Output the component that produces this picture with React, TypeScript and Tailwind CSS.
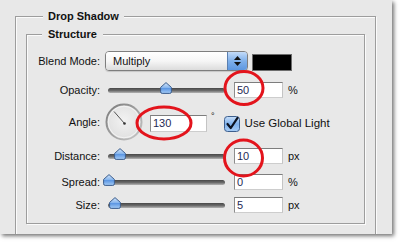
const labelCls = "w-[74px] shrink-0 text-right pr-[1px]";

function Slider({ thumb }: { thumb: number }) {
  return (
    <div className="relative ml-0 h-[16px] w-[123px] shrink-0">
      <div className="absolute left-[3px] top-[6px] h-[5px] w-[117px] rounded-full bg-gradient-to-b from-[#474747] via-[#6a6a6a] to-[#b5b5b5]" />
      <svg
        className="absolute top-0"
        style={{ left: thumb }}
        width="12"
        height="12"
        viewBox="0 0 12 12"
      >
        <defs>
          <linearGradient id="thumbFill" x1="0" y1="0" x2="0" y2="1">
            <stop offset="0" stopColor="#d4e6fb" />
            <stop offset="0.45" stopColor="#8bb8ee" />
            <stop offset="0.55" stopColor="#5d97e3" />
            <stop offset="1" stopColor="#a7cdf6" />
          </linearGradient>
        </defs>
        <path
          d="M6 0.6 L11.4 5.4 V9.8 Q11.4 11.4 9.8 11.4 H2.2 Q0.6 11.4 0.6 9.8 V5.4 Z"
          fill="url(#thumbFill)"
          stroke="#3c5d8c"
          strokeWidth="1"
        />
      </svg>
    </div>
  );
}

function NumField({ value, w = 49 }: { value: string; w?: number }) {
  return (
    <div
      className="h-[16px] shrink-0 border border-t-[#7d7d7d] border-l-[#8d8d8d] border-r-[#c4c4c4] border-b-[#cdcdcd] bg-white pl-[2px] text-[11px] leading-[14px] text-[#1f2a55]"
      style={{ width: w }}
    >
      {value}
    </div>
  );
}

function Row({ label, top, children }: { label: string; top: string; children: React.ReactNode }) {
  return (
    <div className={`flex items-center ${top}`}>
      <div className={labelCls}>{label}</div>
      <div className="ml-[4px] flex items-center">{children}</div>
    </div>
  );
}

export default function App() {
  return (
    <div className="relative h-[243px] w-[400px] overflow-hidden bg-white font-['Liberation_Sans',Arial,sans-serif] text-[11px] text-[#111]">
      <div className="h-[234px] w-[392px] overflow-hidden bg-[#e8e8e8] pl-[15px] pr-[16px] pt-[9px] shadow-[2px_2px_4px_rgba(0,0,0,0.55)]">
        <fieldset className="min-h-[240px] border border-[#9d9d9d] px-[10px] pt-[4px] shadow-[inset_1px_1px_0_#fbfbfb,1px_1px_0_#fbfbfb]">
          <legend className="ml-[17px] bg-[#e8e8e8] px-[5px] text-[11px] font-bold leading-[14px] text-[#111]">
            Drop Shadow
          </legend>
          <fieldset className="border border-[#9d9d9d] pb-[10px] pt-[10px] shadow-[inset_1px_1px_0_#fbfbfb,1px_1px_0_#fbfbfb]">
            <legend className="ml-[15px] bg-[#e8e8e8] px-[6px] text-[11px] font-bold leading-[14px] text-[#111]">
              Structure
            </legend>

            {/* blend mode */}
            <div className="flex h-[20px] items-center">
              <div className={labelCls}>Blend Mode:</div>
              <div className="ml-[4px] flex h-[20px] w-[143px] shrink-0 overflow-hidden rounded-[4px] border border-[#7e7e7e] shadow-[0_1px_1px_rgba(0,0,0,0.15)]">
                <div className="flex flex-1 items-center bg-gradient-to-b from-white via-[#f6f6f6] to-[#dcdcdc] pl-[7px] text-[11px] text-[#111]">
                  Multiply
                </div>
                <div className="flex w-[20px] flex-col items-center justify-center gap-[2px] border-l border-[#5a7fb0] bg-gradient-to-b from-[#c3dbf8] via-[#7fb0ea] to-[#5d97e0]">
                  <svg width="7" height="4" viewBox="0 0 7 4">
                    <path d="M3.5 0 L7 4 H0 Z" fill="#111" />
                  </svg>
                  <svg width="7" height="4" viewBox="0 0 7 4">
                    <path d="M0 0 H7 L3.5 4 Z" fill="#111" />
                  </svg>
                </div>
              </div>
              <div className="ml-[4px] mt-[3px] h-[17px] w-[40px] shrink-0 border border-[#6d6d6d] bg-black" />
            </div>

            <Row label="Opacity:" top="mt-[11px] h-[16px]">
              <Slider thumb={55} />
              <div className="ml-[6px]">
                <NumField value="50" />
              </div>
              <span className="ml-[5px]">%</span>
            </Row>

            {/* angle */}
            <div className="mt-[5px] flex h-[38px] items-center">
              <div className={labelCls}>Angle:</div>
              <svg className="ml-[3px] shrink-0" width="40" height="38" viewBox="0 0 40 38">
                <defs>
                  <linearGradient id="ring" x1="0" y1="0" x2="1" y2="1">
                    <stop offset="0" stopColor="#7a7a7a" />
                    <stop offset="1" stopColor="#c8c8c8" />
                  </linearGradient>
                  <radialGradient id="face" cx="0.5" cy="0.45" r="0.6">
                    <stop offset="0" stopColor="#f2f2f2" />
                    <stop offset="1" stopColor="#dedede" />
                  </radialGradient>
                </defs>
                <circle cx="20" cy="19" r="17.5" fill="url(#face)" stroke="url(#ring)" strokeWidth="2" />
                <circle cx="20" cy="19" r="15.8" fill="none" stroke="#f8f8f8" strokeWidth="0.8" />
                <line x1="20.5" y1="20.5" x2="10" y2="8.5" stroke="#555" strokeWidth="1" />
                <circle cx="20.5" cy="20.5" r="1.3" fill="#333" />
              </svg>
              <div className="ml-[6px] mt-[3px]">
                <div className="h-[17px] w-[57px] border border-t-[#7d7d7d] border-l-[#8d8d8d] border-r-[#c4c4c4] border-b-[#cdcdcd] bg-white pl-[2px] text-[11px] leading-[15px] text-[#1f2a55]">
                  130
                </div>
              </div>
              <span className="ml-[4px] self-start mt-[9px] text-[9px] leading-[9px]">°</span>
              <svg className="ml-[9px] mt-[3px] shrink-0" width="16" height="16" viewBox="0 0 16 16">
                <defs>
                  <linearGradient id="cb" x1="0" y1="0" x2="0" y2="1">
                    <stop offset="0" stopColor="#c9e0fa" />
                    <stop offset="0.5" stopColor="#7fb1ec" />
                    <stop offset="1" stopColor="#a8cdf6" />
                  </linearGradient>
                </defs>
                <rect x="0.5" y="0.5" width="15" height="15" rx="3" fill="url(#cb)" stroke="#3d5f8e" />
                <path d="M3.5 8 L6.8 12 L13.5 1.8" fill="none" stroke="#0c1220" strokeWidth="2.2" strokeLinecap="round" strokeLinejoin="round" />
              </svg>
              <span className="ml-[5px] mt-[3px] text-[11.5px]">Use Global Light</span>
            </div>

            <Row label="Distance:" top="mt-[7px] h-[16px]">
              <Slider thumb={9} />
              <div className="ml-[6px]">
                <NumField value="10" />
              </div>
              <span className="ml-[5px]">px</span>
            </Row>

            <Row label="Spread:" top="mt-[10px] h-[16px]">
              <Slider thumb={-2} />
              <div className="ml-[6px]">
                <NumField value="0" />
              </div>
              <span className="ml-[5px]">%</span>
            </Row>

            <Row label="Size:" top="mt-[7px] h-[16px]">
              <Slider thumb={4} />
              <div className="ml-[6px]">
                <NumField value="5" />
              </div>
              <span className="ml-[5px]">px</span>
            </Row>
          </fieldset>
        </fieldset>
      </div>

      {/* red annotation circles */}
      <svg className="pointer-events-none absolute left-0 top-0" width="400" height="243" viewBox="0 0 400 243">
        <ellipse cx="244" cy="88" rx="19" ry="16.5" fill="none" stroke="#e3141c" strokeWidth="3" />
        <ellipse cx="164" cy="123" rx="27" ry="16" fill="none" stroke="#e3141c" strokeWidth="3" />
        <ellipse cx="243.5" cy="158" rx="19" ry="18" fill="none" stroke="#e3141c" strokeWidth="3" />
      </svg>
    </div>
  );
}
